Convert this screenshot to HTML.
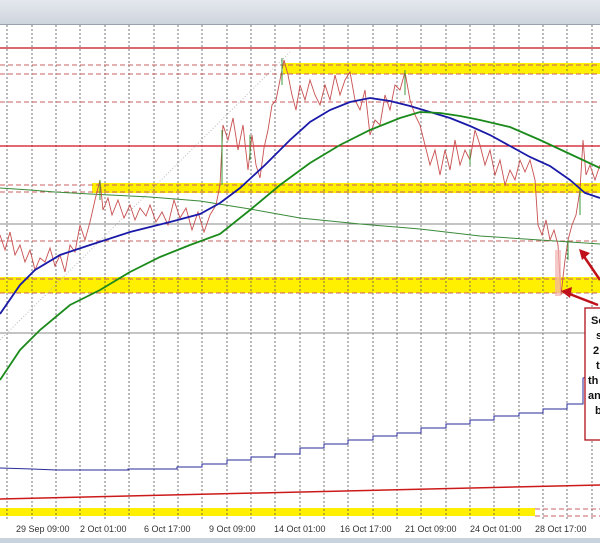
<!DOCTYPE html>
<html><head><style>
html,body{margin:0;padding:0;width:600px;height:543px;overflow:hidden;background:#fff}
svg{display:block}
text{font-family:"Liberation Sans",sans-serif}
</style></head><body>
<svg width="600" height="543" viewBox="0 0 600 543">
<defs><linearGradient id="tb" x1="0" y1="0" x2="0" y2="1"><stop offset="0" stop-color="#e4e8ee"/><stop offset="1" stop-color="#cfd5dd"/></linearGradient></defs>
<rect x="0" y="0" width="600" height="24" fill="url(#tb)"/>
<line x1="0" y1="24.5" x2="600" y2="24.5" stroke="#9aa3ad"/>
<rect x="283" y="63" width="317" height="11" fill="#ffef00"/>
<rect x="92" y="183" width="508" height="10" fill="#ffef00"/>
<rect x="0" y="277" width="600" height="16" fill="#ffef00"/>
<rect x="0" y="508" width="535" height="8" fill="#ffef00"/>
<g stroke="#555" stroke-width="0.8" stroke-dasharray="2,2">
<line x1="7" y1="25" x2="7" y2="520"/><line x1="32" y1="25" x2="32" y2="520"/><line x1="56" y1="25" x2="56" y2="520"/><line x1="80" y1="25" x2="80" y2="520"/><line x1="105" y1="25" x2="105" y2="520"/><line x1="129" y1="25" x2="129" y2="520"/><line x1="154" y1="25" x2="154" y2="520"/><line x1="178" y1="25" x2="178" y2="520"/><line x1="202" y1="25" x2="202" y2="520"/><line x1="227" y1="25" x2="227" y2="520"/><line x1="251" y1="25" x2="251" y2="520"/><line x1="275" y1="25" x2="275" y2="520"/><line x1="300" y1="25" x2="300" y2="520"/><line x1="324" y1="25" x2="324" y2="520"/><line x1="348" y1="25" x2="348" y2="520"/><line x1="373" y1="25" x2="373" y2="520"/><line x1="397" y1="25" x2="397" y2="520"/><line x1="421" y1="25" x2="421" y2="520"/><line x1="446" y1="25" x2="446" y2="520"/><line x1="470" y1="25" x2="470" y2="520"/><line x1="494" y1="25" x2="494" y2="520"/><line x1="519" y1="25" x2="519" y2="520"/><line x1="543" y1="25" x2="543" y2="520"/><line x1="567" y1="25" x2="567" y2="520"/><line x1="592" y1="25" x2="592" y2="520"/>
</g>
<line x1="0" y1="48" x2="600" y2="48" stroke="#c0101a" stroke-width="1.3"/>
<line x1="0" y1="146" x2="600" y2="146" stroke="#d01020" stroke-width="1.3"/>
<g stroke="#c86060" stroke-width="0.9" stroke-dasharray="5,3">
<line x1="0" y1="65" x2="600" y2="65"/><line x1="0" y1="74" x2="600" y2="74"/><line x1="0" y1="102" x2="600" y2="102"/><line x1="0" y1="185" x2="600" y2="185"/><line x1="0" y1="192" x2="600" y2="192"/><line x1="0" y1="241" x2="600" y2="241"/><line x1="0" y1="279" x2="600" y2="279"/><line x1="0" y1="293" x2="600" y2="293"/><line x1="535" y1="509" x2="600" y2="509"/><line x1="535" y1="516" x2="600" y2="516"/>
</g>
<line x1="0" y1="224" x2="600" y2="224" stroke="#888" stroke-width="0.9"/>
<line x1="0" y1="333" x2="600" y2="333" stroke="#888" stroke-width="0.9"/>
<line x1="0" y1="340" x2="290" y2="52" stroke="#bbb" stroke-dasharray="1,2"/>
<polyline fill="none" stroke="#3a8a3a" stroke-width="1" points="0,188 30,190 55,192 90,194 150,197 200,201 250,209 300,218 360,224 420,229 480,236 540,240 600,244"/>
<polyline fill="none" stroke="#c85050" stroke-width="0.9" points="0,235 5,250 10,232 15,255 20,245 25,262 30,250 35,270 40,258 45,262 50,248 55,266 60,255 65,272 70,245 75,252 80,225 85,240 90,222 95,200 100,180 103,210 108,198 112,215 118,200 124,218 130,205 135,220 140,208 146,216 150,205 156,222 162,212 168,225 174,200 180,218 186,208 192,230 198,212 204,232 210,215 216,205 220,185 223,125 228,140 233,118 238,150 243,125 248,170 252,135 256,165 260,178 264,148 268,130 272,105 276,100 280,80 284,60 288,75 292,95 296,110 300,85 305,100 310,80 315,95 320,105 325,85 330,100 335,75 340,95 345,80 350,72 355,100 360,110 365,90 370,135 375,120 380,125 385,95 390,110 395,85 400,90 405,72 410,100 415,115 420,125 425,145 430,165 435,150 440,175 445,150 450,170 455,140 460,165 465,150 470,160 475,130 480,145 485,165 490,150 495,175 500,160 505,185 510,170 515,180 520,160 525,172 530,160 535,180 538,225 542,235 546,220 550,240 554,230 558,245 561,295 565,260 568,240 572,225 576,215 580,190 583,140 586,175 590,165 595,180 600,165"/>
<g stroke="#3a9a3a" stroke-width="1">
<line x1="100" y1="180" x2="100" y2="200"/><line x1="222" y1="130" x2="222" y2="185"/><line x1="282" y1="58" x2="282" y2="85"/><line x1="405" y1="70" x2="405" y2="95"/><line x1="580" y1="190" x2="580" y2="215"/><line x1="568" y1="240" x2="568" y2="260"/><line x1="250" y1="135" x2="250" y2="160"/><line x1="470" y1="150" x2="470" y2="165"/></g>
<rect x="555" y="250" width="6" height="46" fill="#f3b0b0" opacity="0.7"/>
<polyline fill="none" stroke="#1a1aa8" stroke-width="1.8" points="0,314 20,285 35,270 60,255 90,245 130,232 170,222 200,214 220,203 240,188 265,165 290,140 310,122 330,110 350,102 370,98 390,101 410,106 430,112 450,118 470,126 490,135 510,146 530,157 550,166 570,180 585,193 600,198"/>
<polyline fill="none" stroke="#1a8a1a" stroke-width="1.8" points="0,380 20,350 40,330 70,305 100,290 130,272 160,257 190,245 220,234 250,210 280,185 310,163 340,145 370,130 400,118 420,112 440,113 460,116 480,120 510,127 540,140 570,154 600,168"/>
<polyline fill="none" stroke="#2a2a9a" stroke-width="1" points="0,468 32,469 56,470 128,470 128,469 177,469 177,467 202,467 202,464 227,464 227,460 251,460 251,457 275,457 275,454 300,454 300,448 324,448 324,444 348,444 348,440 373,440 373,436 397,436 397,433 421,433 421,428 446,428 446,424 470,424 470,420 494,420 494,416 519,416 519,413 543,413 543,409 567,409 567,404 583,404 583,378 600,375"/>
<line x1="0" y1="499" x2="600" y2="485" stroke="#cc1a1a" stroke-width="1.5"/>
<line x1="598" y1="305" x2="567" y2="293" stroke="#c0101a" stroke-width="2.5"/>
<polygon points="561,291 572,287 570,298" fill="#c0101a"/>
<line x1="600" y1="280" x2="583" y2="255" stroke="#c0101a" stroke-width="2.5"/>
<polygon points="579,249 590,253 582,260" fill="#c0101a"/>
<rect x="585" y="308" width="20" height="132" fill="#fff" stroke="#b01018" stroke-width="1.3"/>
<g font-weight="bold" font-size="11" fill="#111">
<text x="591" y="324">So</text><text x="596" y="339">s</text><text x="593" y="354">2</text><text x="596" y="369">t</text><text x="588" y="384">th</text><text x="588" y="399">an</text><text x="595" y="414">b</text>
</g>
<rect x="0" y="519" width="600" height="18" fill="#fff"/>
<g font-size="9" fill="#333">
<text x="16" y="532">29 Sep 09:00</text><text x="80" y="532">2 Oct 01:00</text><text x="144" y="532">6 Oct 17:00</text><text x="209" y="532">9 Oct 09:00</text><text x="274" y="532">14 Oct 01:00</text><text x="340" y="532">16 Oct 17:00</text><text x="405" y="532">21 Oct 09:00</text><text x="470" y="532">24 Oct 01:00</text><text x="535" y="532">28 Oct 17:00</text>
</g>
<rect x="0" y="538" width="600" height="5" fill="#c9d3de"/>
</svg>
</body></html>
